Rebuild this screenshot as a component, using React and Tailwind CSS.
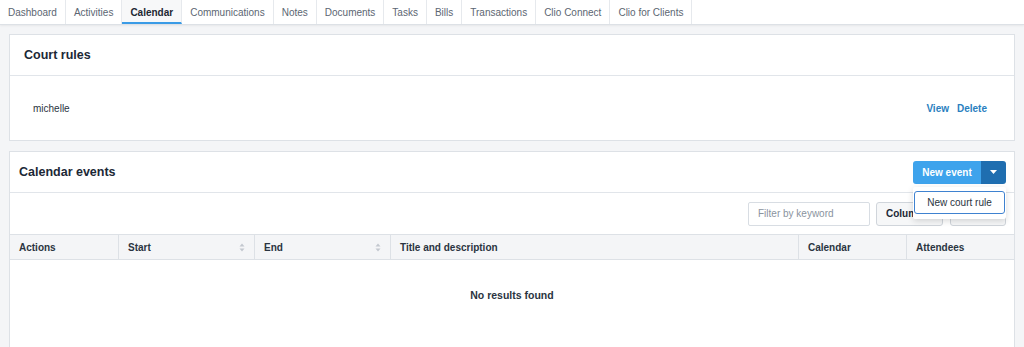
import React from "react";

const tabs = ["Dashboard","Activities","Calendar","Communications","Notes","Documents","Tasks","Bills","Transactions","Clio Connect","Clio for Clients"];

function SortIcon() {
  return (
    <svg width="6" height="9" viewBox="0 0 6 9" className="text-[#c3c8cf]">
      <path d="M3 0.5 L5.5 3.5 H0.5 Z" fill="currentColor" />
      <path d="M3 8.5 L5.5 5.5 H0.5 Z" fill="currentColor" />
    </svg>
  );
}

export default function App() {
  return (
    <div className="w-[1024px] h-[347px] overflow-hidden bg-[#f4f5f7] text-[#2a3441]" style={{ fontFamily: '"Liberation Sans", Arial, sans-serif' }}>
      {/* Tabs */}
      <div className="flex h-[25px] bg-white border-b border-[#dde1e6] shadow-[0_1px_2px_rgba(0,0,0,0.06)]">
        {tabs.map((t) => (
          <div
            key={t}
            className={
              "h-full flex items-center px-[8px] text-[10px] border-r border-[#e6e9ed] " +
              (t === "Calendar"
                ? "font-bold text-[#1d2733] bg-[#f7f8f9] border-b-2 border-b-[#3a9be6] pt-[2px]"
                : "text-[#5c6672]")
            }
          >
            {t}
          </div>
        ))}
      </div>

      <div className="px-[9px] pt-[9px] flex flex-col gap-[10px]">
        {/* Court rules */}
        <div className="bg-white border border-[#dde1e6]">
          <div className="h-[41px] flex items-center px-[14px] border-b border-[#e1e5ea]">
            <span className="text-[12.5px] font-bold text-[#1c2836]">Court rules</span>
          </div>
          <div className="h-[64px] flex items-center justify-between pl-[23px] pr-[27px]">
            <span className="text-[10px] text-[#2a3441]">michelle</span>
            <div className="flex gap-[8px] text-[10px] font-bold text-[#2a7fc0]">
              <span>View</span>
              <span>Delete</span>
            </div>
          </div>
        </div>

        {/* Calendar events */}
        <div className="bg-white border border-[#dde1e6] h-[220px]">
          <div className="h-[41px] flex items-center justify-between pl-[9px] pr-[8px] border-b border-[#e1e5ea]">
            <span className="text-[12.5px] font-bold text-[#1c2836]">Calendar events</span>
            <div className="relative flex h-[23px] rounded-[3px] overflow-visible">
              <div className="w-[68px] flex items-center justify-center bg-[#3ea3ec] text-white text-[10px] font-bold rounded-l-[3px]">New event</div>
              <div className="w-[25px] flex items-center justify-center bg-[#1f6eb0] rounded-r-[3px]">
                <svg width="7" height="4" viewBox="0 0 7 4"><path d="M0 0 H7 L3.5 4 Z" fill="white" /></svg>
              </div>
              <div className="absolute left-0 top-[26px] w-[93px] h-[32px] bg-white shadow-[0_2px_6px_rgba(0,0,0,0.15)] rounded-[2px] z-10 pt-[4px] px-[1px]">
                <div className="h-[23px] flex items-center justify-center border border-[#3f82d0] rounded-[3px] text-[10px] text-[#2a3441]">New court rule</div>
              </div>
            </div>
          </div>
          <div className="h-[41px] flex items-center justify-end gap-[6px] pr-[8px]">
            <div className="w-[122px] h-[24px] border border-[#d8dde3] rounded-[2px] flex items-center px-[9px] text-[10px] text-[#8a939e]">Filter by keyword</div>
            <div className="w-[67px] h-[24px] border border-[#d0d5db] bg-[#f6f7f8] rounded-[3px] flex items-center px-[9px] text-[10px] font-bold text-[#1c2836]">Columns</div>
            <div className="w-[56px] h-[24px] border border-[#d0d5db] bg-[#f6f7f8] rounded-[3px] ml-[1px]"></div>
          </div>
          <div className="flex h-[26px] bg-[#f4f5f7] border-y border-[#dde1e6] text-[10px] font-bold text-[#2a3441]">
            <div className="w-[109px] flex items-center px-[9px] border-r border-[#dde1e6]">Actions</div>
            <div className="w-[136px] flex items-center justify-between px-[9px] border-r border-[#dde1e6]">Start<SortIcon /></div>
            <div className="w-[136px] flex items-center justify-between px-[9px] border-r border-[#dde1e6]">End<SortIcon /></div>
            <div className="w-[408px] flex items-center px-[9px] border-r border-[#dde1e6]">Title and description</div>
            <div className="w-[108px] flex items-center px-[9px] border-r border-[#dde1e6]">Calendar</div>
            <div className="flex-1 flex items-center px-[9px]">Attendees</div>
          </div>
          <div className="h-[72px] flex items-center justify-center text-[10.5px] font-bold text-[#2a3441]">No results found</div>
        </div>
      </div>
    </div>
  );
}
